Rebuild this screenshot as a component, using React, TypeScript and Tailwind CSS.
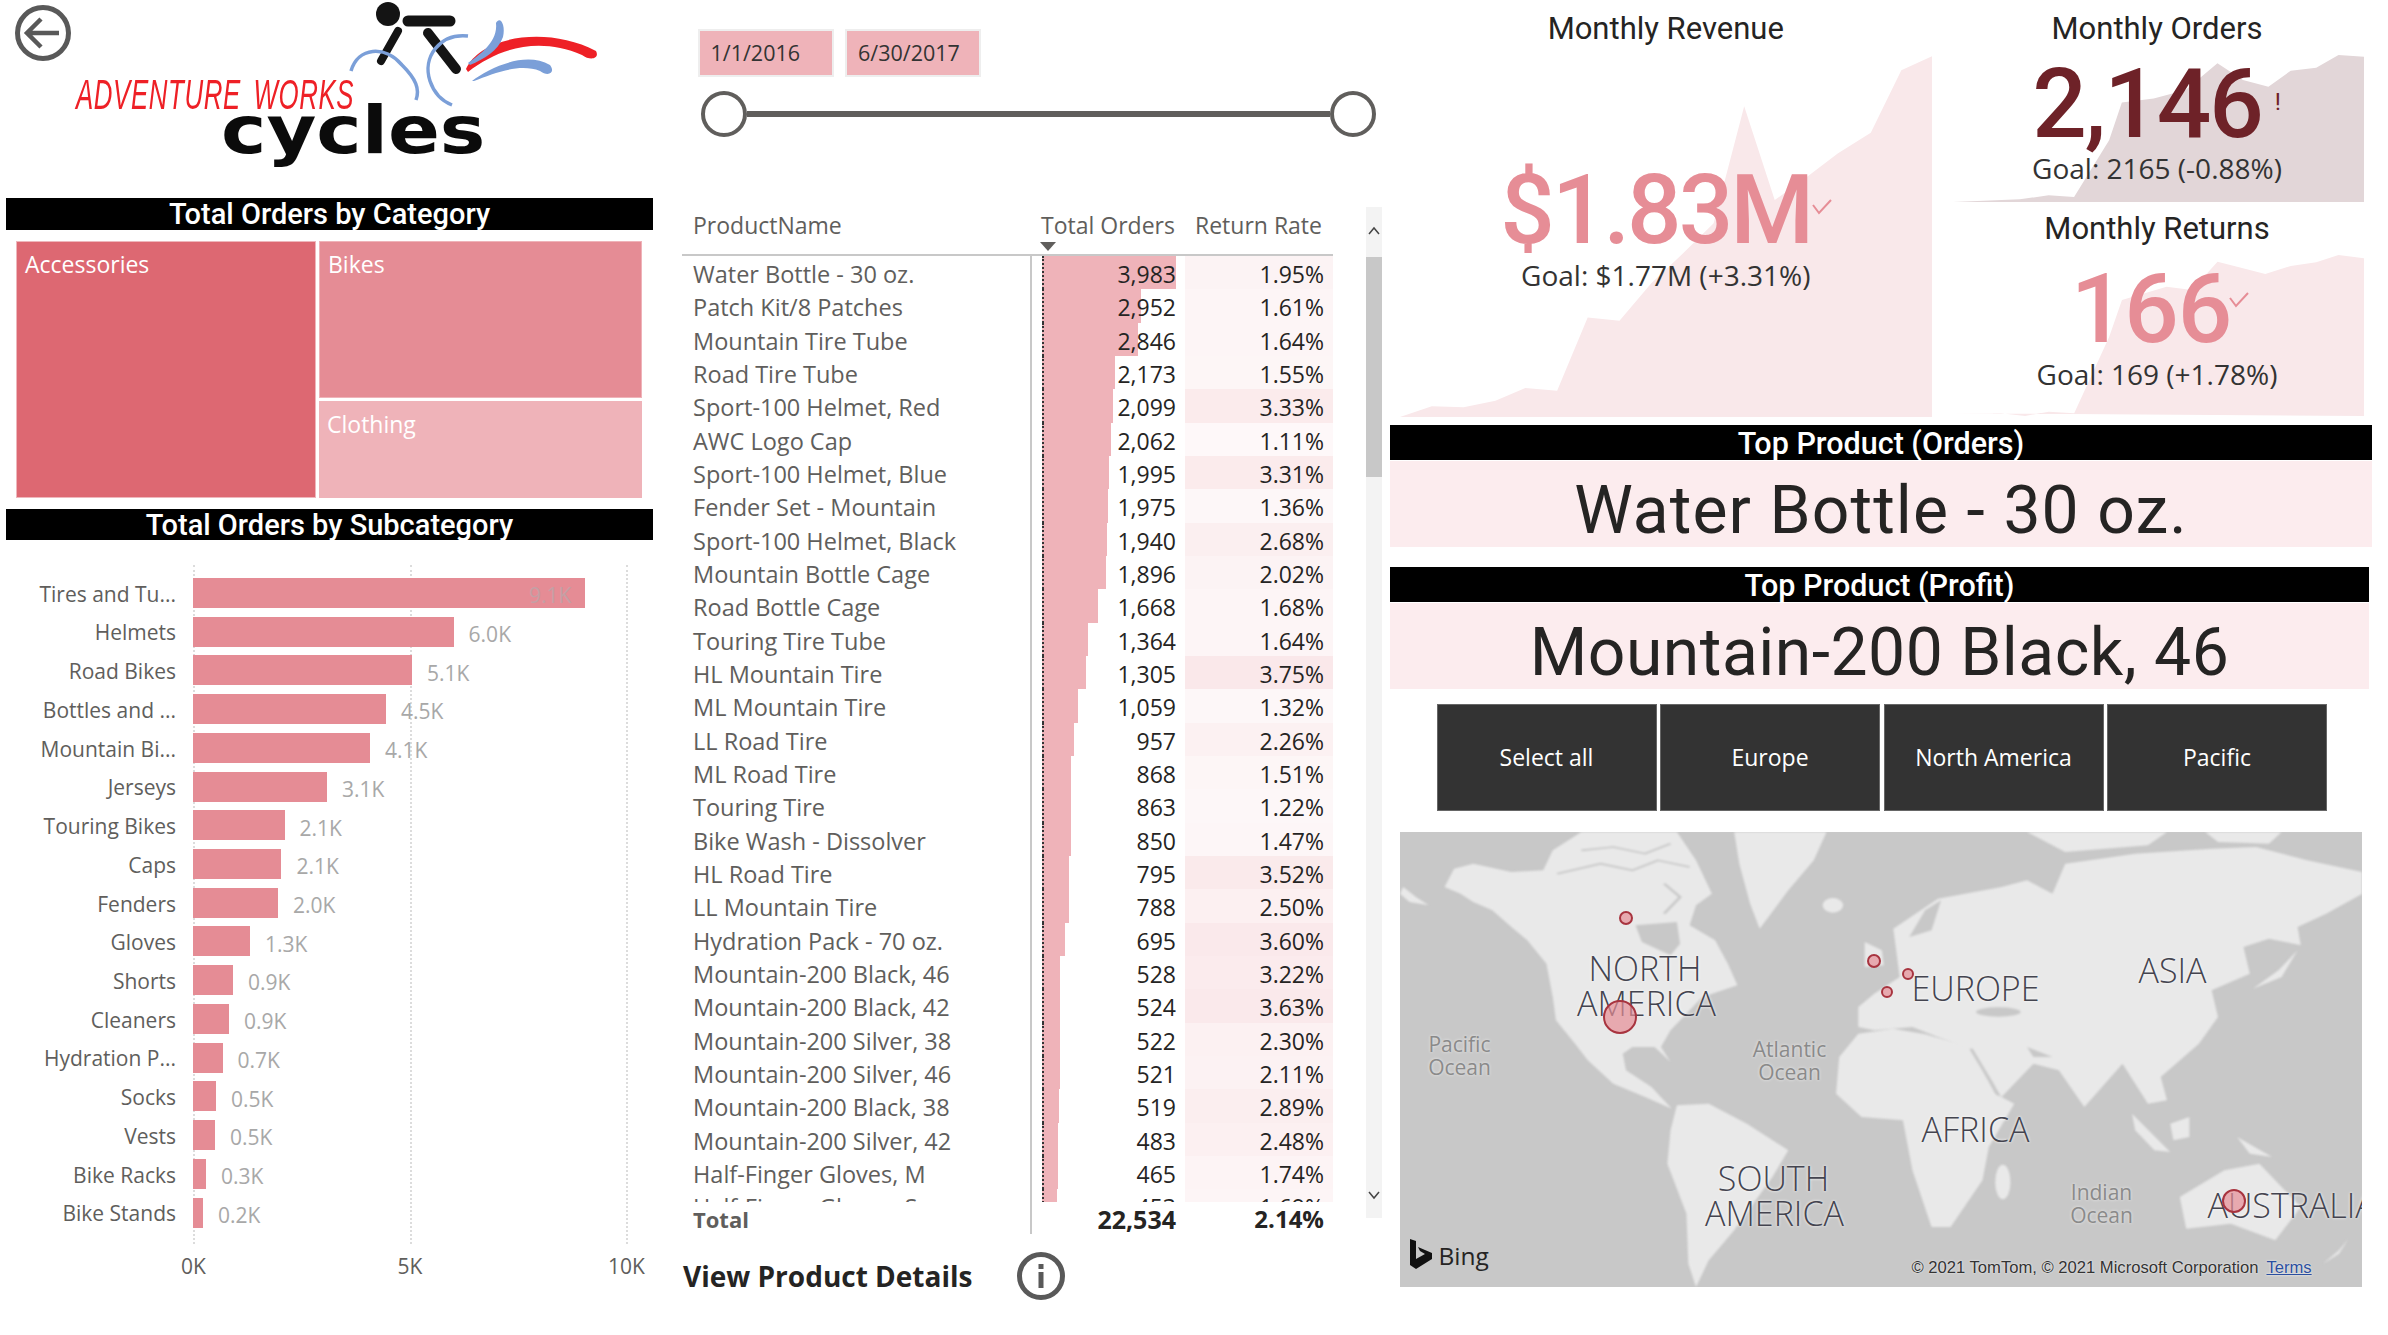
import React from "react";

const din = "font-['Roboto',sans-serif]";
const segoe = "font-['Open_Sans',sans-serif]";

const subcats = [
  { name: "Tires and Tu...", end: 585, value: "9.1K" },
  { name: "Helmets", end: 453.6, value: "6.0K" },
  { name: "Road Bikes", end: 412, value: "5.1K" },
  { name: "Bottles and ...", end: 386, value: "4.5K" },
  { name: "Mountain Bi...", end: 370, value: "4.1K" },
  { name: "Jerseys", end: 327, value: "3.1K" },
  { name: "Touring Bikes", end: 284.5, value: "2.1K" },
  { name: "Caps", end: 281.4, value: "2.1K" },
  { name: "Fenders", end: 278, value: "2.0K" },
  { name: "Gloves", end: 250, value: "1.3K" },
  { name: "Shorts", end: 233, value: "0.9K" },
  { name: "Cleaners", end: 229, value: "0.9K" },
  { name: "Hydration P...", end: 222.5, value: "0.7K" },
  { name: "Socks", end: 216, value: "0.5K" },
  { name: "Vests", end: 215, value: "0.5K" },
  { name: "Bike Racks", end: 206, value: "0.3K" },
  { name: "Bike Stands", end: 203, value: "0.2K" },
];

const products: [string, number, number][] = [
  ["Water Bottle - 30 oz.", 3983, 1.95],
  ["Patch Kit/8 Patches", 2952, 1.61],
  ["Mountain Tire Tube", 2846, 1.64],
  ["Road Tire Tube", 2173, 1.55],
  ["Sport-100 Helmet, Red", 2099, 3.33],
  ["AWC Logo Cap", 2062, 1.11],
  ["Sport-100 Helmet, Blue", 1995, 3.31],
  ["Fender Set - Mountain", 1975, 1.36],
  ["Sport-100 Helmet, Black", 1940, 2.68],
  ["Mountain Bottle Cage", 1896, 2.02],
  ["Road Bottle Cage", 1668, 1.68],
  ["Touring Tire Tube", 1364, 1.64],
  ["HL Mountain Tire", 1305, 3.75],
  ["ML Mountain Tire", 1059, 1.32],
  ["LL Road Tire", 957, 2.26],
  ["ML Road Tire", 868, 1.51],
  ["Touring Tire", 863, 1.22],
  ["Bike Wash - Dissolver", 850, 1.47],
  ["HL Road Tire", 795, 3.52],
  ["LL Mountain Tire", 788, 2.5],
  ["Hydration Pack - 70 oz.", 695, 3.6],
  ["Mountain-200 Black, 46", 528, 3.22],
  ["Mountain-200 Black, 42", 524, 3.63],
  ["Mountain-200 Silver, 38", 522, 2.3],
  ["Mountain-200 Silver, 46", 521, 2.11],
  ["Mountain-200 Black, 38", 519, 2.89],
  ["Mountain-200 Silver, 42", 483, 2.48],
  ["Half-Finger Gloves, M", 465, 1.74],
  ["Half-Finger Gloves, S", 453, 1.69],
];

const mapLabels: { text: string; x: number; y: number; big: boolean }[] = [
  { text: "NORTH", x: 245.5, y: 136, big: true },
  { text: "AMERICA", x: 247, y: 171, big: true },
  { text: "EUROPE", x: 576, y: 156, big: true },
  { text: "ASIA", x: 773, y: 138, big: true },
  { text: "AFRICA", x: 576, y: 297, big: true },
  { text: "SOUTH", x: 374, y: 346, big: true },
  { text: "AMERICA", x: 375, y: 381, big: true },
  { text: "Pacific", x: 60, y: 213, big: false },
  { text: "Ocean", x: 60, y: 236, big: false },
  { text: "Atlantic", x: 390, y: 218, big: false },
  { text: "Ocean", x: 390, y: 241, big: false },
  { text: "Indian", x: 702, y: 361, big: false },
  { text: "Ocean", x: 702, y: 384, big: false },
];

const bubbles = [
  { x: 220.5, y: 185, r: 17 },
  { x: 226.5, y: 86, r: 7 },
  { x: 474.5, y: 129, r: 7 },
  { x: 508, y: 142, r: 6 },
  { x: 487, y: 160, r: 6 },
  { x: 834.5, y: 369, r: 12 },
];

function SectionTitle({ text, className }: { text: string; className: string }) {
  return (
    <div className={`flex items-center justify-center bg-black text-white font-medium pt-[2px] ${din} ${className}`}>
      {text}
    </div>
  );
}

function Logo() {
  return (
    <div className="relative w-[530px] h-[172px]">
      <svg className="absolute left-0 top-0" width="530" height="172" viewBox="76 4 530 172" fill="none">
        <circle cx="388" cy="17" r="12" fill="#141414" />
        <path d="M408 24 H450" stroke="#141414" strokeWidth="11" strokeLinecap="round" />
        <path d="M428 36 L456 72" stroke="#141414" strokeWidth="10" strokeLinecap="round" />
        <path d="M398 34 L381 64" stroke="#141414" strokeWidth="8" strokeLinecap="round" />
        <path d="M351 74 C358 50 385 48 402 68 C416 82 420 92 416 103" stroke="#7b9fd8" strokeWidth="3.5" />
        <path d="M468 39 C440 36 422 60 430 84 C434 96 442 104 452 108" stroke="#7b9fd8" strokeWidth="3.5" />
        <path d="M466 72 C480 40 546 28 596 54 C600 62 590 64 582 58 C540 40 500 50 468 75 Z" fill="#ee2026" />
        <path d="M468 66 C482 56 498 44 496 26 C500 18 506 28 503 40 C498 54 484 62 470 68 Z" fill="#7b9fd8" />
        <path d="M472 84 C490 70 526 54 550 68 C556 76 548 80 540 74 C520 66 494 76 474 84 Z" fill="#7b9fd8" />
      </svg>
      <span className="absolute left-0 top-[73px] text-[42px] leading-[42px] italic text-[#ee2026] tracking-[1px] [word-spacing:8px] whitespace-nowrap origin-left scale-x-[0.615] font-['Liberation_Sans',sans-serif]">
        ADVENTURE WORKS
      </span>
      <span className="absolute left-[145px] top-[97px] text-[66px] leading-[66px] font-bold text-[#0b0b0b] origin-left scale-x-[1.16] font-['DejaVu_Sans',sans-serif]">
        cycles
      </span>
    </div>
  );
}

function Sidebar() {
  return (
    <div className="w-[670px] shrink-0 pl-[6px]">
      <div className="flex items-start h-[198px]">
        <svg className="ml-[9px] mt-[5px] shrink-0" width="56" height="56" viewBox="0 0 56 56" fill="none" stroke="#595959">
          <circle cx="28" cy="28" r="25.5" strokeWidth="5" />
          <path d="M44 28 H13 M26 14 L12 28 L26 42" strokeWidth="4.5" />
        </svg>
        <div className="mt-[1px] ml-[5px]">
          <Logo />
        </div>
      </div>
      <SectionTitle text="Total Orders by Category" className="w-[647px] h-[32px] text-[29px]" />
      <div className={`flex gap-[3px] mt-[11px] ml-[10px] w-[626px] h-[257px] text-[23px] text-white ${segoe}`}>
        <div className="w-[300px] bg-[#dd6872] pl-[8px] pt-[5px] border border-[#eeb7bc]">Accessories</div>
        <div className="flex-1 flex flex-col gap-[3px]">
          <div className="flex-1 bg-[#e58c95] pl-[8px] pt-[5px] border border-[#efb3b9]">Bikes</div>
          <div className="h-[97px] bg-[#efb3b9] pl-[8px] pt-[6px]">Clothing</div>
        </div>
      </div>
      <SectionTitle text="Total Orders by Subcategory" className="w-[647px] h-[31px] mt-[11px] text-[29px]" />
      <div className={`relative mt-[38px] ${segoe}`}>
        <div className="absolute left-[187px] top-[-13px] h-[679px] border-l-2 border-dotted border-[#dcdcdc]" />
        <div className="absolute left-[404px] top-[-13px] h-[679px] border-l-2 border-dotted border-[#dcdcdc]" />
        <div className="absolute left-[620px] top-[-13px] h-[679px] border-l-2 border-dotted border-[#dcdcdc]" />
        {subcats.map((row, i) => (
          <div key={row.name} className="relative flex items-center h-[30px] mb-[8.72px]">
            <div className="w-[170px] pt-[3px] text-right text-[21px] text-[#605e5c] whitespace-nowrap">{row.name}</div>
            <div className="h-[30px] ml-[17px] bg-[#e58c95]" style={{ width: row.end - 193 }} />
            <div
              className={
                i === 0
                  ? "relative -ml-[56px] pt-[6px] text-[21px] text-[#c4a0a5]"
                  : "ml-[15px] pt-[6px] text-[21px] text-[#a8a8a8]"
              }
            >
              {row.value}
            </div>
          </div>
        ))}
        <div className="flex ml-[79.25px] mt-[23px] text-[21px] text-[#605e5c]">
          <div className="w-[216.5px] shrink-0 text-center">0K</div>
          <div className="w-[216.5px] shrink-0 text-center">5K</div>
          <div className="w-[216.5px] shrink-0 text-center">10K</div>
        </div>
      </div>
    </div>
  );
}

function ProductTable() {
  return (
    <div className={`flex items-start mt-[70px] ml-[12px] ${segoe}`}>
      <div className="w-[651px]">
        <div className="relative flex h-[49px] border-b-2 border-[#c8c8c8] text-[#605e5c] text-[23px]">
          <div className="w-[350px] pl-[11px] pt-[1px]">ProductName</div>
          <div className="w-[163px] pl-[9px] pt-[1px]">Total Orders</div>
          <div className="pt-[1px]">Return Rate</div>
          <div className="absolute left-[358px] top-[35px] w-0 h-0 border-x-[8px] border-x-transparent border-t-[9px] border-t-[#605e5c]" />
        </div>
        <div className="h-[946px] overflow-hidden text-[23.5px]">
          {products.map(([name, orders, rate]) => (
            <div key={name} className="flex h-[33.34px] leading-[36px]">
              <div className="w-[350px] pl-[11px] text-[#605e5c] border-r-2 border-[#c8c8c8] whitespace-nowrap">{name}</div>
              <div className="relative w-[153px] text-right pr-[9px] text-[23px] text-[#252423]">
                <div
                  className="absolute left-[10px] top-0 h-full bg-[#efb3b9] border-l-2 border-dotted border-[#333]"
                  style={{ width: orders * 0.03364 }}
                />
                <span className="relative">{orders.toLocaleString("en-US")}</span>
              </div>
              <div
                className="w-[148px] text-right pr-[9px] text-[23px] text-[#252423]"
                style={{ backgroundColor: `rgba(230,141,150,${(rate / 3.75) * 0.2})` }}
              >
                {rate.toFixed(2)}%
              </div>
            </div>
          ))}
        </div>
        <div className="flex h-[32px] leading-[34px] font-bold text-[#252423]">
          <div className="w-[350px] pl-[11px] text-[22px] text-[#605e5c] border-r-2 border-[#c8c8c8]">Total</div>
          <div className="w-[153px] text-right pr-[9px] text-[25px]">22,534</div>
          <div className="w-[148px] text-right pr-[9px] text-[24px]">2.14%</div>
        </div>
      </div>
      <div className="relative ml-[33px] w-[16px] h-[1011px] bg-[#f3f3f3]">
        <div className="absolute left-0 top-[50px] w-full h-[220px] bg-[#c8c8c8]" />
        <svg className="absolute left-[1px] top-[19px]" width="14" height="10" viewBox="0 0 14 10" fill="none" stroke="#444" strokeWidth="1.5">
          <path d="M2 8 L7 2 L12 8" />
        </svg>
        <svg className="absolute left-[1px] top-[983px]" width="14" height="10" viewBox="0 0 14 10" fill="none" stroke="#444" strokeWidth="1.5">
          <path d="M2 2 L7 8 L12 2" />
        </svg>
      </div>
    </div>
  );
}

function MiddleColumn() {
  return (
    <div className="w-[720px] shrink-0">
      <div className={`flex gap-[11.5px] mt-[29px] ml-[27.5px] text-[21.5px] text-[#333] ${segoe}`}>
        <div className="w-[136px] h-[48px] leading-[44px] bg-[#efb3b9] border-2 border-[#eeeeee] pl-[11px]">1/1/2016</div>
        <div className="w-[136px] h-[48px] leading-[44px] bg-[#efb3b9] border-2 border-[#eeeeee] pl-[11px]">6/30/2017</div>
      </div>
      <div className="flex items-center mt-[14px] ml-[31px] w-[675px]">
        <div className="w-[46px] h-[46px] rounded-full border-[4px] border-[#605e5c] bg-white shrink-0" />
        <div className="flex-1 h-[6px] bg-[#605e5c]" />
        <div className="w-[46px] h-[46px] rounded-full border-[4px] border-[#605e5c] bg-white shrink-0" />
      </div>
      <ProductTable />
      <div className="flex items-center mt-[18px] ml-[13px]">
        <div className={`w-[288px] text-[28px] leading-[48px] font-bold text-[#252423] whitespace-nowrap ${segoe}`}>View Product Details</div>
        <svg className="ml-[46px]" width="48" height="48" viewBox="0 0 48 48" fill="none">
          <circle cx="24" cy="24" r="21.5" stroke="#595959" strokeWidth="5" />
          <rect x="21.5" y="20" width="5" height="16" fill="#595959" />
          <rect x="21.5" y="12" width="5" height="5" fill="#595959" />
        </svg>
      </div>
    </div>
  );
}

function Check({ className }: { className: string }) {
  return (
    <svg className={`absolute ${className}`} width="22" height="16" viewBox="0 0 22 16" fill="none" stroke="#e68d96" strokeWidth="2">
      <path d="M2 6 L8 14 L20 1" />
    </svg>
  );
}

function KpiGrid() {
  return (
    <div className="flex h-[425px]">
      <div className={`relative ml-[9.5px] w-[532.5px] h-[417px] flex flex-col items-center text-[#252423] ${din}`}>
        <svg className="absolute left-0 top-[56px]" width="532.5" height="361" viewBox="15 167 837 1085" preserveAspectRatio="none">
          <polygon
            fill="#f9e8ea"
            points="15,1252 65,1220 115,1223 165,1203 212,1165 262,1173 310,953 360,963 410,850 460,760 508,670 556,318 604,600 655,530 703,460 755,398 803,210 852,167 852,1252"
          />
        </svg>
        <div className="relative h-[58px] leading-[58px] text-[31px]">Monthly Revenue</div>
        <div className="relative mt-[102px] h-[100px] leading-[100px] text-[96px] font-medium tracking-[-3px] text-[#e68d96] -translate-x-[10px]">
          $1.83M
          <Check className="right-[-22px] top-[39px]" />
        </div>
        <div className={`relative h-[40px] leading-[40px] mt-[-5px] text-[28px] text-[#333] ${segoe}`}>Goal: $1.77M (+3.31%)</div>
      </div>
      <div className={`ml-[18px] w-[414px] text-[#252423] ${din}`}>
        <div className="relative h-[202px] flex flex-col items-center">
          <svg className="absolute left-[3px] top-[55px]" width="411" height="147" viewBox="885 165 645 440" preserveAspectRatio="none">
            <polygon
              fill="#e2d6d8"
              points="885,605 990,597 1035,585 1075,590 1130,420 1150,307 1200,295 1250,270 1300,190 1340,240 1380,260 1415,212 1455,203 1490,165 1530,170 1530,605"
            />
          </svg>
          <div className="relative h-[58px] leading-[58px] text-[31px]">Monthly Orders</div>
          <div className="relative mt-[3px] h-[83px] leading-[86px] text-[96px] font-medium tracking-[-2px] text-[#6e2228] -translate-x-[10px]">
            2,146
            <span className="absolute right-[-17px] top-[-2px] text-[24px] font-normal">!</span>
          </div>
          <div className={`relative h-[48px] leading-[48px] text-[28px] text-[#333] ${segoe}`}>Goal: 2165 (-0.88%)</div>
        </div>
        <div className="relative h-[214px] flex flex-col items-center">
          <svg className="absolute left-0 top-[53px]" width="414" height="161" viewBox="880 765 650 483" preserveAspectRatio="none">
            <polygon
              fill="#f9e8ea"
              points="880,1240 960,1240 998,1248 1035,1235 1075,1240 1130,1010 1150,900 1220,860 1260,870 1300,785 1340,805 1375,822 1415,798 1455,787 1490,765 1530,775 1530,1248"
            />
          </svg>
          <div className="relative h-[54px] leading-[54px] text-[31px]">Monthly Returns</div>
          <div className="relative mt-[2px] h-[100px] leading-[102px] text-[96px] font-medium tracking-[-1px] text-[#e68d96] -translate-x-[6px]">
            166
            <Check className="right-[-19px] top-[34px]" />
          </div>
          <div className={`relative h-[32px] leading-[32px] text-[28px] text-[#333] ${segoe}`}>Goal: 169 (+1.78%)</div>
        </div>
      </div>
    </div>
  );
}

function TopProduct({ title, name, className, nameClass }: { title: string; name: string; className: string; nameClass: string }) {
  return (
    <div className={className}>
      <SectionTitle text={title} className="h-[35px] text-[30.5px]" />
      <div className={`flex items-center justify-center h-[86px] mt-[1px] pt-[12px] bg-[#fcecee] text-[66px] text-[#252423] ${din} ${nameClass}`}>
        {name}
      </div>
    </div>
  );
}

function WorldMap() {
  return (
    <div className="relative ml-[9.5px] mt-[21px] w-[962.5px] h-[455px] bg-[#c8c8c8] overflow-hidden">
      <svg className="absolute inset-0 blur-[1px]" width="962.5" height="455" viewBox="15 5 1512 1365" preserveAspectRatio="none">
        <g fill="#e9e9e9">
          <polygon points="85,170 100,115 130,100 190,125 240,120 255,60 300,5 450,5 480,90 505,190 480,225 470,285 510,330 530,400 545,465 490,500 470,540 440,600 425,650 440,695 415,650 380,650 365,670 370,720 410,770 442,835 400,800 350,760 310,690 290,640 260,570 255,500 245,400 215,330 190,290 160,240 130,215 110,190" />
          <polygon points="540,5 685,5 665,90 625,180 580,295 565,220 548,100" />
          <ellipse cx="695" cy="225" rx="16" ry="22" />
          <polygon points="20,170 40,200 60,225 30,215 15,190" />
          <polygon points="450,825 500,820 560,880 625,960 600,1040 540,1200 500,1290 480,1370 468,1300 465,1150 435,1000 440,900" />
          <polygon points="735,610 790,595 840,612 910,650 950,790 980,820 940,950 930,1050 880,1190 850,1190 820,1020 805,870 740,860 700,790 705,680" />
          <polygon points="735,590 735,530 760,490 800,440 790,295 860,205 960,170 1000,150 1040,190 1060,100 1170,70 1290,55 1360,50 1440,90 1527,125 1527,190 1470,250 1425,290 1430,345 1380,325 1340,350 1350,430 1290,480 1300,560 1270,640 1210,740 1220,810 1190,820 1150,700 1090,830 1050,720 1010,700 960,800 905,650 860,620 820,590 760,600" />
          <polygon points="1000,5 1220,5 1190,45 1060,65" />
          <polygon points="1280,5 1400,5 1380,40 1300,35" />
          <polygon points="745,335 772,360 775,405 745,410" />
          <polygon points="1425,360 1400,440 1355,475 1395,420" />
          <ellipse cx="962" cy="1055" rx="12" ry="52" />
          <polygon points="1165,850 1225,965 1200,960 1170,900" />
          <polygon points="1225,880 1255,860 1255,920 1230,930" />
          <polygon points="1330,920 1385,980 1350,970" />
          <polygon points="1240,1100 1310,1020 1365,1000 1430,1130 1390,1230 1320,1180 1250,1195" />
          <polygon points="1505,1225 1490,1270 1465,1300 1490,1260" />
        </g>
        <g fill="#c8c8c8">
          <polygon points="385,285 450,275 455,340 440,375 395,335" />
          <polygon points="840,240 865,210 850,300 815,320" />
          <ellipse cx="955" cy="545" rx="35" ry="14" />
          <polygon points="1000,650 1040,680 1010,680" />
        </g>
        <g fill="none" stroke="#c8c8c8" strokeWidth="5">
          <path d="M262 130 L330 100 L380 120 L420 90 L470 110" />
          <path d="M300 60 L350 50 L400 70 L440 40" />
          <path d="M430 160 L455 200 L430 250" />
          <path d="M912 655 L945 760 L955 795" />
        </g>
      </svg>
      {mapLabels.map((l, i) => (
        <div
          key={i}
          className={
            l.big
              ? `absolute -translate-x-1/2 -translate-y-1/2 text-[34px] font-light text-[#44444f] whitespace-nowrap [text-shadow:0_0_3px_#fff] ${segoe}`
              : `absolute -translate-x-1/2 -translate-y-1/2 text-[21px] text-[#8a8a8a] whitespace-nowrap [text-shadow:0_0_3px_#eee] ${segoe}`
          }
          style={{ left: l.x, top: l.y }}
        >
          {l.text}
        </div>
      ))}
      <div className={`absolute left-[808px] top-[351px] text-[34px] leading-[44px] font-light text-[#44444f] whitespace-nowrap [text-shadow:0_0_3px_#fff] ${segoe}`}>
        AUSTRALIA
      </div>
      {bubbles.map((b, i) => (
        <div
          key={i}
          className="absolute rounded-full bg-[#e68d96]/70 border-2 border-[#a8343f]"
          style={{ left: b.x - b.r, top: b.y - b.r, width: b.r * 2, height: b.r * 2 }}
        />
      ))}
      <svg className="absolute left-[10px] top-[407px]" width="22" height="30" viewBox="0 0 22 30" fill="#111">
        <path d="M0 0 L6 2 V20 L15 15 L10 12 L8 8 L22 14 V20 L6 30 L0 26 Z" />
      </svg>
      <div className={`absolute left-[39px] top-[406px] text-[24.5px] text-[#252423] ${segoe}`}>Bing</div>
      <div className="absolute left-[512px] top-[427px] flex gap-[8px] text-[16.6px] leading-[18px] text-[#333] whitespace-nowrap [text-shadow:0_0_2px_#fff] font-['Liberation_Sans',sans-serif]">
        <span>© 2021 TomTom, © 2021 Microsoft Corporation</span>
        <span className="text-[#2b4fa0] underline">Terms</span>
      </div>
    </div>
  );
}

function RightColumn() {
  const regions = ["Select all", "Europe", "North America", "Pacific"];
  return (
    <div className="w-[998px] shrink-0">
      <KpiGrid />
      <TopProduct title="Top Product (Orders)" name="Water Bottle - 30 oz." className="w-[982px]" nameClass="tracking-[1.1px]" />
      <TopProduct title="Top Product (Profit)" name="Mountain-200 Black, 46" className="w-[979px] mt-[20px]" nameClass="tracking-[0.5px]" />
      <div className={`flex gap-[3.5px] ml-[46.5px] mt-[15px] ${segoe}`}>
        {regions.map((r) => (
          <div key={r} className="flex items-center justify-center w-[220px] h-[107px] bg-[#333333] border border-[#666] text-[23px] text-white">
            {r}
          </div>
        ))}
      </div>
      <WorldMap />
    </div>
  );
}

export default function App() {
  return (
    <div className="flex w-[2388px] h-[1335px] bg-white overflow-hidden">
      <Sidebar />
      <MiddleColumn />
      <RightColumn />
    </div>
  );
}
